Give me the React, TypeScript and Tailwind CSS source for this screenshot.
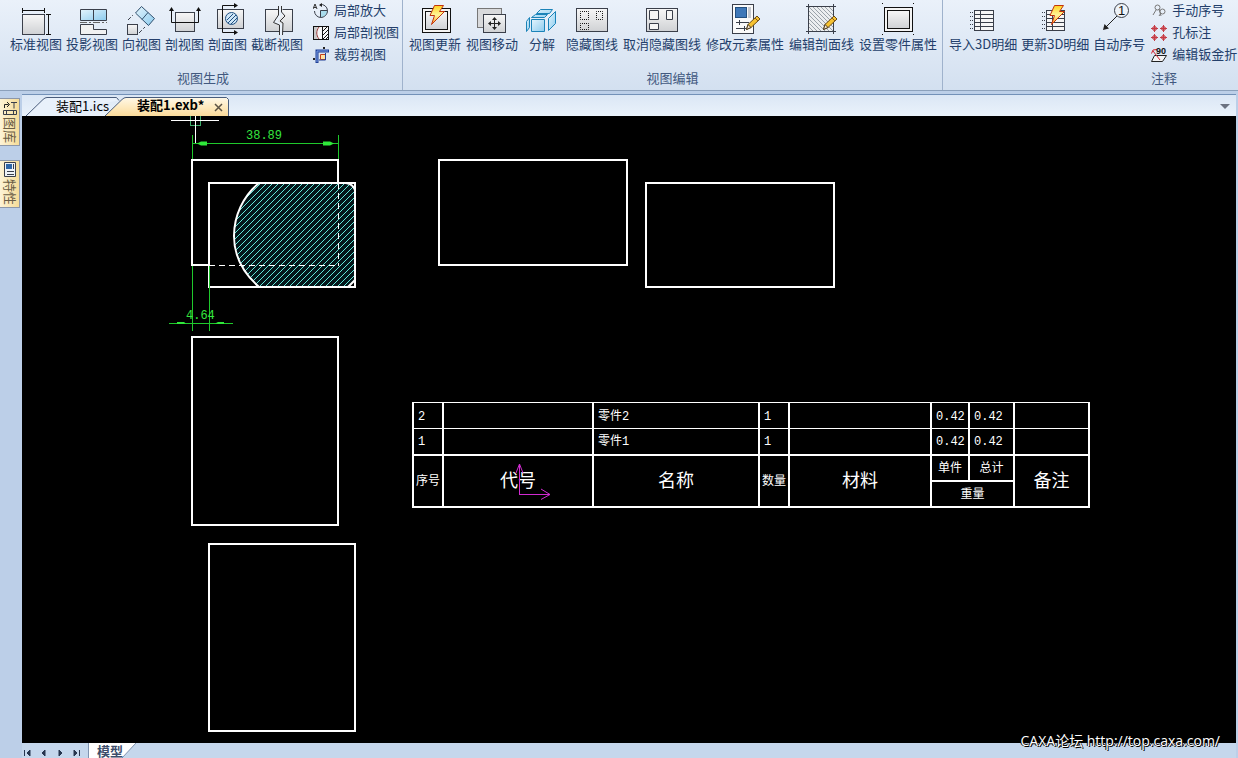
import type { ReactNode } from "react";

const INK = "#3a3f4a";

// 32x36 icon box used by every large ribbon button
function BigIcon({ children }: { children: ReactNode }) {
  return (
    <svg width="32" height="36" viewBox="0 0 32 36" fill="none" stroke={INK} aria-hidden="true">
      <defs>
        <linearGradient id="paper" x1="0" y1="0" x2="0" y2="1">
          <stop offset="0" stopColor="#f7f7f7" />
          <stop offset="1" stopColor="#cfd1d4" />
        </linearGradient>
        <linearGradient id="glass" x1="0" y1="0" x2="1" y2="1">
          <stop offset="0" stopColor="#e4f5fd" />
          <stop offset="1" stopColor="#8ccbee" />
        </linearGradient>
        <linearGradient id="spark" x1="0" y1="0" x2="0" y2="1">
          <stop offset="0" stopColor="#ffd21f" />
          <stop offset="0.5" stopColor="#fff59a" />
          <stop offset="1" stopColor="#ff9d1c" />
        </linearGradient>
      </defs>
      {children}
    </svg>
  );
}

function Bolt() {
  return (
    <path
      d="M15.500 5.500h9l-4 6h5l-13 13 3-9h-4.500z"
      fill="url(#spark)"
      stroke="#c2340c"
      strokeLinejoin="round"
    />
  );
}

function Pencil() {
  return (
    <g strokeLinejoin="round">
      <path d="M17.500 29.500l1.500-5 9-8.500 3 3-9 8.500z" fill="#f6c231" stroke="#6b4a12" />
      <path d="M17.500 29.500l1.500-5 3 3z" fill="#f8e7cf" stroke="#4a3a20" />
      <path d="M26 18l3 3" stroke="#8a5a1a" />
    </g>
  );
}

const icons = {
  standard: (
    <BigIcon>
      <rect x="2.500" y="14.500" width="22" height="20" fill="url(#paper)" />
      <path d="M2.500 8v5M24.500 8v5M2 10.500h23M26 14.500h5M26 34.500h5M28.500 14v21" stroke="#111" />
    </BigIcon>
  ),
  projection: (
    <BigIcon>
      <path d="M4.500 9.500h26v11h-26zM17.500 9.500v11" fill="url(#glass)" />
      <path d="M4 22.500h27" strokeDasharray="7 2 2 2" stroke="#666" />
      <path d="M4.500 24.500h13v5h13v5h-26z" fill="#f1f1f1" />
    </BigIcon>
  ),
  direction: (
    <BigIcon>
      <rect x="1.500" y="24.500" width="10" height="10" fill="url(#paper)" />
      <path d="M15.500 6.500l13 12-6 7-13-12.500zM22 12.500l-6 7" fill="url(#glass)" stroke="#31506e" />
      <path d="M2 20l5-5M13 33l6-6" strokeDasharray="4 2" />
    </BigIcon>
  ),
  section: (
    <BigIcon>
      <rect x="6.500" y="12.500" width="19" height="19" fill="url(#paper)" />
      <path d="M2.500 9v13.500h27V9" stroke="#111" />
      <path d="M0 11l2.500-4 2.500 4zM27 11l2.500-4 2.500 4z" fill="#111" stroke="none" />
    </BigIcon>
  ),
  profile: (
    <BigIcon>
      <rect x="5.500" y="9.500" width="26" height="19" fill="url(#paper)" />
      <circle cx="19.500" cy="18.500" r="6" fill="#cfe6f7" stroke="#1f4f80" />
      <path d="M15 20l6-6M16 23l8-8M19 24l6-6" stroke="#1f4f80" />
      <path d="M23 5.500H10.500v27H23" stroke="#111" />
      <path d="M22 3l4 2.500-4 2.500zM22 30l4 2.500-4 2.500z" fill="#111" stroke="none" />
    </BigIcon>
  ),
  broken: (
    <BigIcon>
      <rect x="4.500" y="9.500" width="27" height="22" fill="url(#paper)" />
      <path
        d="M17.500 6v9l-5 7.500 6 2.500v10h3V24l-5-2.500 5-6.500V6z"
        fill="#eaf1fa"
        stroke="none"
      />
      <path d="M17.500 6v9l-5 7.500 6 2.500v10M20.500 6v6l3.500 4-5 5 3 2-.5 12" stroke="#333" />
    </BigIcon>
  ),
  update: (
    <BigIcon>
      <rect x="3.500" y="8.500" width="28" height="24" fill="#f4f4f4" stroke="#111" />
      <rect x="6.500" y="11.500" width="22" height="18" fill="url(#paper)" stroke="#111" />
      <Bolt />
    </BigIcon>
  ),
  move: (
    <BigIcon>
      <rect x="1.500" y="8.500" width="24" height="19" fill="#d9dadc" stroke="#777" />
      <rect x="7.500" y="14.500" width="22" height="18" fill="url(#paper)" />
      <path d="M18.500 18v11M13 23.500h11" stroke="#222" />
      <path
        d="M16 20l2.500-3 2.500 3zM16 27l2.500 3 2.500-3zM15 21l-3 2.500 3 2.500zM22 21l3 2.500-3 2.500z"
        fill="#222"
        stroke="none"
      />
    </BigIcon>
  ),
  explode: (
    <BigIcon>
      <g fill="url(#glass)" stroke="#1b83b8" strokeLinejoin="round">
        <path d="M14.500 9.500h12l-3 4h-13zM9.500 14.500h12l-3 3h-13z" />
        <path d="M5.500 19.500h13v12h-13z" />
        <path d="M.5 21.500l3-4v10l-3 4z" />
        <path d="M22.500 18.500l7-7v12l-7 7z" />
      </g>
    </BigIcon>
  ),
  hideLines: (
    <BigIcon>
      <rect x=".5" y="8.500" width="31" height="23" fill="url(#paper)" />
      <path
        d="M4.500 11.500h8v8h-8zM20.500 11.500h6v8h-6zM4.500 23.500h8v6h-8z"
        stroke="#111"
        strokeDasharray="1 1"
        strokeDashoffset=".5"
      />
    </BigIcon>
  ),
  showLines: (
    <BigIcon>
      <rect x=".5" y="8.500" width="31" height="23" fill="url(#paper)" />
      <path d="M3.500 10.500h9v9h-9zM20.500 10.500h6v9h-6zM3.500 23.500h9v6h-9z" fill="#f5f5f5" />
    </BigIcon>
  ),
  modify: (
    <BigIcon>
      <rect x="3.500" y="4.500" width="21" height="29" fill="#fafafa" />
      <rect x="6.500" y="7.500" width="11" height="10" fill="#3f78b8" stroke="#24507f" />
      <path d="M19 7h3v11h-3z" fill="#c6c9cf" stroke="none" />
      <path d="M7 22.500h13M10.500 20v5M7 28.500h11M15.500 26v5" />
      <Pencil />
    </BigIcon>
  ),
  hatch: (
    <BigIcon>
      <rect x="3" y="7" width="24" height="24" fill="#eceef0" stroke="none" />
      <path
        d="M3 27l4 4M3 23l8 8M3 19l12 12M3 15l16 16M3 11l20 20M3 7l24 24M7 7l20 20M11 7l16 16M15 7l12 12M19 7l8 8M23 7l4 4"
        stroke="#9aa2a9"
      />
      <path d="M2.500 4v30M27.500 4v30M0 6.500h30M0 31.500h30" />
      <Pencil />
    </BigIcon>
  ),
  part: (
    <BigIcon>
      <rect x="2.500" y="7.500" width="28" height="24" fill="#f4f4f4" stroke="#111" />
      <rect x="5.500" y="10.500" width="22" height="18" fill="url(#paper)" stroke="#111" />
      <path d="M0 3.500h1M31 3.500h1M0 34.500h1M31 34.500h1" stroke="#111" />
    </BigIcon>
  ),
  importList: (
    <BigIcon>
      <rect x="7.500" y="10.500" width="19" height="20" fill="#f6f6f6" />
      <path d="M7.500 14.500h19M7.500 18.500h19M7.500 22.500h19M7.500 26.500h19M13.500 10.500v20" />
      <path d="M3 12.500h4M3 16.500h4M3 20.500h4M3 24.500h4M3 28.500h4" strokeDasharray="1 1" />
    </BigIcon>
  ),
  updateList: (
    <BigIcon>
      <rect x="7.500" y="10.500" width="18" height="20" fill="#f6f6f6" />
      <path d="M7.500 14.500h18M7.500 18.500h18M7.500 22.500h18M7.500 26.500h18M13.500 10.500v20" />
      <path d="M3 12.500h4M3 16.500h4M3 20.500h4M3 24.500h4M3 28.500h4" strokeDasharray="1 1" />
      <Bolt />
    </BigIcon>
  ),
  balloon: (
    <BigIcon>
      <path d="M14 16L2 28" stroke="#222" />
      <path d="M0 30l1.500-6 4.500 4.500z" fill="#222" stroke="none" />
      <circle cx="18.500" cy="10.500" r="7" fill="#eef3f8" />
      <text x="18.500" y="15" fontSize="13" textAnchor="middle" fill="#111" stroke="none" fontFamily="Liberation Sans, sans-serif">
        1
      </text>
    </BigIcon>
  ),
};

function SmallIcon({ children }: { children: ReactNode }) {
  return (
    <svg width="16" height="16" viewBox="0 0 16 16" fill="none" stroke={INK} aria-hidden="true">
      {children}
    </svg>
  );
}

const smallIcons = {
  zoom: (
    <SmallIcon>
      <path d="M7.500 7.500h7c0 4-3 7-7 7z" fill="#a9dcec" />
      <path d="M7 1.500a6.500 6.500 0 0 1 7.500 6M7.500 14.500A6.500 6.500 0 0 1 1.500 8" />
      <path d="M0 6l2-5 2 5M1 4.500h2" stroke="#333" />
      <path d="M9 0L6 2l3 2z" fill="#222" stroke="none" />
    </SmallIcon>
  ),
  localSection: (
    <SmallIcon>
      <rect x=".5" y="1.500" width="15" height="13" fill="#f7f7f7" stroke="#111" />
      <path d="M1 2h4c-2 4-2 8 0 12H1z" fill="#c9c9c9" stroke="none" />
      <path d="M6 2c-3 4-3 8 0 12" stroke="#9a3a3a" />
      <path d="M9.500 2v12M10 6l4-4M10 10l5-5M10 14l5-5M13 14l2-2" stroke="#111" />
    </SmallIcon>
  ),
  crop: (
    <SmallIcon>
      <path d="M4 16V4h12" stroke="#1f3f96" strokeWidth="3" />
      <path d="M4 15V4h11" stroke="#7fa4ea" />
      <path d="M7.500 7.500h5v5h-5z" fill="#ffe1a0" stroke="#c4401c" />
      <path d="M12.500 6v7H6" stroke="#1f3f96" />
      <path d="M11 0v2M0 12h2" stroke="#222" strokeWidth="2" />
    </SmallIcon>
  ),
  manual: (
    <SmallIcon>
      <circle cx="6.500" cy="4.500" r="2.500" stroke="#777" />
      <circle cx="11.500" cy="8.500" r="2.500" stroke="#777" />
      <path d="M5 7l-3 5M8 6l2 7M10 10l-2 3" stroke="#777" />
    </SmallIcon>
  ),
  hole: (
    <SmallIcon>
      <g stroke="#c43c46" fill="#e9a9ad">
        <circle cx="3.500" cy="3.500" r="2" />
        <circle cx="12.500" cy="3.500" r="2" />
        <circle cx="3.500" cy="12.500" r="2" />
        <circle cx="12.500" cy="12.500" r="2" />
        <path d="M3.500 0v7M0 3.500h7M12.500 0v7M9 3.500h7M3.500 9v7M0 12.500h7M12.500 9v7M9 12.500h7" />
      </g>
    </SmallIcon>
  ),
  bend: (
    <SmallIcon>
      <path d="M.5 14.500l3-6h12l-4 6z" fill="#f4f4f4" stroke="#222" />
      <path d="M9 13L2 4M.5 6.500L2 3l4-.5" stroke="#d3202c" />
      <text x="5" y="7" fontSize="9" fontWeight="bold" fill="#111" stroke="none" fontFamily="Liberation Sans, sans-serif">
        90
      </text>
    </SmallIcon>
  ),
};

type Tool = { label: string; icon: ReactNode };

const viewTools: Tool[] = [
  { label: "标准视图", icon: icons.standard },
  { label: "投影视图", icon: icons.projection },
  { label: "向视图", icon: icons.direction },
  { label: "剖视图", icon: icons.section },
  { label: "剖面图", icon: icons.profile },
  { label: "截断视图", icon: icons.broken },
];

const viewSmallTools: Tool[] = [
  { label: "局部放大", icon: smallIcons.zoom },
  { label: "局部剖视图", icon: smallIcons.localSection },
  { label: "裁剪视图", icon: smallIcons.crop },
];

const editTools: Tool[] = [
  { label: "视图更新", icon: icons.update },
  { label: "视图移动", icon: icons.move },
  { label: "分解", icon: icons.explode },
  { label: "隐藏图线", icon: icons.hideLines },
  { label: "取消隐藏图线", icon: icons.showLines },
  { label: "修改元素属性", icon: icons.modify },
  { label: "编辑剖面线", icon: icons.hatch },
  { label: "设置零件属性", icon: icons.part },
];

const noteTools: Tool[] = [
  { label: "导入3D明细", icon: icons.importList },
  { label: "更新3D明细", icon: icons.updateList },
  { label: "自动序号", icon: icons.balloon },
];

const noteSmallTools: Tool[] = [
  { label: "手动序号", icon: smallIcons.manual },
  { label: "孔标注", icon: smallIcons.hole },
  { label: "编辑钣金折", icon: smallIcons.bend },
];

function BigButton({ label, icon }: Tool) {
  return (
    <button type="button" className="flex min-w-[38px] shrink-0 flex-col items-center whitespace-nowrap">
      {icon}
      <span className="leading-4">{label}</span>
    </button>
  );
}

function SmallColumn({ tools }: { tools: Tool[] }) {
  return (
    <div className="flex flex-col">
      {tools.map((tool) => (
        <button key={tool.label} type="button" className="flex h-[22px] items-center gap-[5px] whitespace-nowrap">
          {tool.icon}
          <span className="pb-[2px] leading-4">{tool.label}</span>
        </button>
      ))}
    </div>
  );
}

function Ribbon() {
  return (
    <header className="flex h-[91px] shrink-0 overflow-hidden border-b border-[#8ba0bb] bg-linear-to-b from-[#eaf1fa] to-[#d3e0f0] text-[13px] text-[#243f6b]">
      <section className="flex w-[403px] shrink-0 flex-col border-r border-[#9fb2cc]">
        <div className="flex h-[70px] items-start pl-[10px]">
          <div className="flex gap-1">
            {viewTools.map((tool) => (
              <BigButton key={tool.label} {...tool} />
            ))}
          </div>
          <div className="ml-[10px]">
            <SmallColumn tools={viewSmallTools} />
          </div>
        </div>
        <h2 className="pl-1 text-center leading-4 text-[#42597f]">视图生成</h2>
      </section>
      <section className="flex w-[540px] shrink-0 flex-col border-r border-[#9fb2cc]">
        <div className="flex h-[70px] items-start gap-[5px] pl-[6px]">
          {editTools.map((tool) => (
            <BigButton key={tool.label} {...tool} />
          ))}
        </div>
        <h2 className="text-center leading-4 text-[#42597f]">视图编辑</h2>
      </section>
      <section className="flex w-[442px] shrink-0 flex-col">
        <div className="flex h-[70px] items-start pl-[6px]">
          <div className="flex gap-1">
            {noteTools.map((tool) => (
              <BigButton key={tool.label} {...tool} />
            ))}
          </div>
          <div className="ml-[6px]">
            <SmallColumn tools={noteSmallTools} />
          </div>
        </div>
        <h2 className="text-center leading-4 text-[#42597f]">注释</h2>
      </section>
    </header>
  );
}

function SideTab({ label, icon }: Tool) {
  return (
    <button
      type="button"
      className="flex h-12 w-5 flex-col items-center gap-[2px] border border-l-0 border-[#8d97a8] bg-linear-to-r from-[#fdf3d6] to-[#f6dc97] text-[13px] text-[#6a5d45]"
    >
      {icon}
      <span className="leading-4 [text-orientation:sideways] [writing-mode:vertical-rl]">{label}</span>
    </button>
  );
}

function SideBar() {
  return (
    <aside className="flex w-[22px] shrink-0 flex-col gap-[14px] pt-[4px]">
      <SideTab
        label="图库"
        icon={
          <SmallIcon>
            <path d="M2.500 9V5.500h4M5 3l2.500 2.500L5 8" stroke="#222" />
            <path d="M9 3.500h6M12 3.500v6" />
            <path d="M1.500 11.500h13v4h-13zM4.500 11.500v4M11.500 11.500v4" />
          </SmallIcon>
        }
      />
      <SideTab
        label="特性"
        icon={
          <SmallIcon>
            <path d="M2.500 1.500h11v14h-11z" fill="#eef2f7" />
            <path d="M4 3h6v5H4z" fill="#2f66a8" stroke="none" />
            <path d="M11.500 3v5M5 10.500h7M5 13.500h7" />
          </SmallIcon>
        }
      />
    </aside>
  );
}

function FileTabs() {
  return (
    <div className="flex h-[22px] shrink-0 items-end border-t border-[#7391b8] bg-linear-to-b from-[#dbe7f5] to-[#eaf2fb] pl-[3px] text-[13px] text-black">
      <button type="button" className="relative h-5 w-[95px] pl-[31px] text-left leading-4">
        <svg className="absolute inset-0" width="95" height="20" fill="#e9f1fb" stroke="#4a5d7c" aria-hidden="true">
          <path d="M1 20L18 3.500Q20 1.500 22 1.500H91.500L94 4.500" />
        </svg>
        <span className="relative whitespace-nowrap">装配1.ics</span>
      </button>
      <div className="relative -ml-4 flex h-5 w-[125px] items-center justify-between pr-[5px] pl-[33px]">
        <svg className="absolute inset-0" width="125" height="20" stroke="#4a5d7c" aria-hidden="true">
          <defs>
            <linearGradient id="activeTab" x1="0" y1="0" x2="0" y2="1">
              <stop offset="0" stopColor="#fff8e8" />
              <stop offset="0.5" stopColor="#feeac0" />
              <stop offset="1" stopColor="#fbdb9a" />
            </linearGradient>
          </defs>
          <path d="M1 20L18 3.500Q20 1.500 22 1.500H122.500L124.500 3.500V20" fill="url(#activeTab)" />
        </svg>
        <button type="button" className="relative pb-[2px] leading-4 font-bold whitespace-nowrap">
          装配1.exb*
        </button>
        <button type="button" aria-label="关闭" className="relative">
          <svg width="11" height="11" viewBox="0 0 11 11" stroke="#5c5344" strokeWidth="1.500" aria-hidden="true">
            <path d="M2 3l7 7M9 3l-7 7" />
          </svg>
        </button>
      </div>
      <button type="button" aria-label="标签列表" className="mr-[6px] mb-[6px] ml-auto">
        <svg width="10" height="6" viewBox="0 0 10 6" fill="#6b7280" aria-hidden="true">
          <path d="M0 0h10L5 5z" />
        </svg>
      </button>
    </div>
  );
}

// model space geometry, shifted so the view keeps window coordinates
function Drawing() {
  return (
    <svg className="absolute inset-0 h-full w-full" fill="none" aria-hidden="true">
      <defs>
        <pattern id="hatchFill" width="6" height="6" patternUnits="userSpaceOnUse">
          <rect width="6" height="6" fill="#03161a" />
          <path d="M-1 7L7 -1M-1 1L1 -1M5 7L7 5" stroke="#62e6d8" />
        </pattern>
      </defs>
      <g transform="translate(-22 -116)">
        <path
          d="M259 183H346Q353 184 355 190V280L348 287H259C242 272 234 255 234 236C234 216 243 196 259 183Z"
          fill="url(#hatchFill)"
        />
        <g stroke="#fff" strokeWidth="2">
          <path d="M209 265H192V160H338V183" />
          <path d="M209 183H355V287H209Z" />
          <path d="M259 183C243 196 234 216 234 236C234 255 242 272 259 287M346 183Q353 184 355 190M355 280L348 287" />
          <rect x="439" y="160" width="188" height="105" />
          <rect x="646" y="183" width="188" height="104" />
          <rect x="192" y="337" width="146" height="188" />
          <rect x="209" y="544" width="146" height="187" />
        </g>
        <path d="M209 265.500H338M338.500 183V266" stroke="#fff" strokeDasharray="6 4" />

        <g stroke="#1fc92c">
          <path d="M192.500 135V159M338.500 135V159M193 143.500H338" />
          <path d="M192.500 266V331M209.500 266V331M169 323.500H233" />
          <rect x="190.500" y="115.500" width="10" height="10" stroke="#3fae6c" />
        </g>
        <g fill="#2fe83a">
          <path d="M197 143.500l4-2h6v4h-6zM334 143.500l-4-2h-7v4h7zM186 323.500l-2-1.500h-7v2h7zM215 323.500l3-1.500h6v2h-6z" />
        </g>
        <path d="M171 120.500H219M195.500 116V143" stroke="#fff" />
        <g fill="#35e63f" fontSize="12" fontFamily="Liberation Mono, monospace">
          <text x="246" y="139">38.89</text>
          <text x="186" y="319">4.64</text>
        </g>
      </g>
    </svg>
  );
}

const parts = [
  { no: "2", name: "零件2", qty: "1", unit: "0.42", total: "0.42" },
  { no: "1", name: "零件1", qty: "1", unit: "0.42", total: "0.42" },
];

function PartsTable() {
  const cell = "border-x-2 border-y border-white p-0 pt-[2px] pl-1 text-left font-normal";
  const head = "border-2 border-white p-0 pt-[2px] text-center font-normal";
  return (
    <table className="absolute top-[286px] left-[390px] w-[678px] table-fixed border-collapse text-xs leading-4 text-white">
      <colgroup>
        <col className="w-[30px]" />
        <col className="w-[150px]" />
        <col className="w-[166px]" />
        <col className="w-[30px]" />
        <col className="w-[142px]" />
        <col className="w-[38px]" />
        <col className="w-[45px]" />
        <col className="w-[75px]" />
      </colgroup>
      <tbody>
        {parts.map((part) => (
          <tr key={part.no} className="h-[26px]">
            <td className={cell}>{part.no}</td>
            <td className={cell} />
            <td className={cell}>{part.name}</td>
            <td className={cell}>{part.qty}</td>
            <td className={cell} />
            <td className={cell}>{part.unit}</td>
            <td className={cell}>{part.total}</td>
            <td className={cell} />
          </tr>
        ))}
      </tbody>
      <tfoot>
        <tr className="h-[26px]">
          <th rowSpan={2} className={head}>序号</th>
          <th rowSpan={2} className={`${head} text-lg`}>代号</th>
          <th rowSpan={2} className={`${head} text-lg`}>名称</th>
          <th rowSpan={2} className={head}>数量</th>
          <th rowSpan={2} className={`${head} text-lg`}>材料</th>
          <th className={head}>单件</th>
          <th className={head}>总计</th>
          <th rowSpan={2} className={`${head} text-lg`}>备注</th>
        </tr>
        <tr className="h-[26px]">
          <th colSpan={2} className={head}>重量</th>
        </tr>
      </tfoot>
    </table>
  );
}

function Canvas() {
  return (
    <main className="relative min-h-0 flex-1 overflow-hidden bg-black font-['Liberation_Mono','Noto_Sans_CJK_SC',monospace]">
      <Drawing />
      <PartsTable />
      {/* coordinate origin marker */}
      <svg
        className="absolute top-[346px] left-[490px]"
        width="40"
        height="40"
        fill="none"
        stroke="#d12ad1"
        aria-hidden="true"
      >
        <path d="M7.500 33V2M4 11l3.500-9L11 11M7 32.500H38M29 27l9 5.500-9 5" />
      </svg>
    </main>
  );
}

function SheetBar() {
  const arrows = [
    { label: "第一页", d: "M1.500 2v6M7 2v6L4 5z" },
    { label: "上一页", d: "M6 2v6L3 5z" },
    { label: "下一页", d: "M4 2v6l3-3z" },
    { label: "最后一页", d: "M3 2v6l3-3zM8.500 2v6" },
  ];
  return (
    <footer className="flex h-[15px] shrink-0 bg-[#c5d7ec]">
      <nav className="flex items-center gap-[6px] pr-[7px] pl-[1px]">
        {arrows.map((arrow) => (
          <button key={arrow.label} type="button" aria-label={arrow.label} className="pt-1">
            <svg width="10" height="10" viewBox="0 0 10 10" fill="#27364f" stroke="#27364f" aria-hidden="true">
              <path d={arrow.d} strokeWidth="1" />
            </svg>
          </button>
        ))}
      </nav>
      <button type="button" className="relative flex w-12 items-end justify-center pr-1">
        <svg className="absolute inset-0" width="48" height="15" aria-hidden="true">
          <path d="M0 0H48L34 15H0z" fill="#fff" />
          <path d="M.5 0V15M48 0L34 15" stroke="#7f93b0" />
        </svg>
        <span className="relative text-[13px] leading-[14px] font-bold text-[#3c4d6b]">模型</span>
      </button>
    </footer>
  );
}

export default function App() {
  return (
    <div className="flex h-screen flex-col overflow-hidden bg-[#bccfe8] font-['Noto_Sans_CJK_SC',sans-serif]">
      <Ribbon />
      <div className="flex min-h-0 flex-1 pt-[3px] pr-[2px]">
        <SideBar />
        <div className="relative flex min-w-0 flex-1 flex-col">
          <FileTabs />
          <Canvas />
          <SheetBar />
          <p className="absolute right-4 bottom-2 font-['Open_Sans','Noto_Sans_CJK_SC',sans-serif] text-sm leading-[18px] whitespace-nowrap text-white [text-shadow:1px_1px_0_#000,-1px_0_0_#000,0_-1px_0_#000]">
            CAXA论坛 http://top.caxa.com/
          </p>
        </div>
      </div>
    </div>
  );
}
